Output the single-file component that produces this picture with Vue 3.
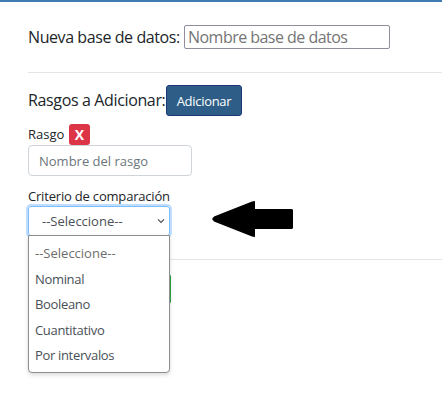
<script setup>
import { ref } from 'vue'

const database = ref('')
const feature = ref('')
const options = ['--Seleccione--', 'Nominal', 'Booleano', 'Cuantitativo', 'Por intervalos']
</script>

<template>
  <main class="page">
    <form class="form" @submit.prevent>
      <div class="database-row">
        <label class="heading" for="db">Nueva base de datos:</label>
        <input id="db" v-model="database" class="database" placeholder="Nombre base de datos" />
      </div>
      <hr class="rule" />
      <div class="add-row">
        <span class="heading traits">Rasgos a Adicionar:</span>
        <button type="button" class="add">Adicionar</button>
      </div>
      <div class="feature-row">
        <label class="small feature-label" for="feature">Rasgo</label>
        <button type="button" class="remove">X</button>
      </div>
      <input id="feature" v-model="feature" class="feature" placeholder="Nombre del rasgo" />
      <span class="small criterion">Criterio de comparación</span>
      <div class="select-row">
        <div class="select">
          <span class="value">--Seleccione--</span>
          <svg class="chevron" width="8" height="6" viewBox="0 0 8 6">
            <path d="M1 1.3 4 4.3 7 1.3" fill="none" stroke="#495057" stroke-width="1.2" />
          </svg>
          <ul class="menu">
            <li v-for="(option, i) in options" :key="option" :class="['option', 'o' + i]">
              <span>{{ option }}</span>
            </li>
          </ul>
        </div>
        <svg class="arrow" width="82" height="37" viewBox="0 0 82 37">
          <path d="M0 18 2 15.500 40 0.500 43 0V8H80L81 9V27L80 28H43V36L40 35.500 2 20.500Z" fill="#000" />
        </svg>
      </div>
      <hr class="rule bottom" />
      <button type="button" class="save" aria-label="Guardar"></button>
    </form>
  </main>
</template>

<style>
body {
  margin: 0;
  background: #fff;
}
</style>

<style scoped>
* {
  box-sizing: border-box;
}
.page {
  height: 400px;
  overflow: hidden;
  border-top: 2px solid #3f7ab3;
  font-family: "Open Sans", "Noto Sans", sans-serif;
  color: #212529;
}
.form {
  display: flex;
  flex-direction: column;
  align-items: flex-start;
  padding: 23px 0 0 28px;
}
.database-row {
  display: flex;
  align-items: center;
  height: 24px;
}
.heading {
  width: 156px;
  font-size: 16px;
  line-height: 24px;
  letter-spacing: -0.42px;
  white-space: nowrap;
}
.database {
  width: 206px;
  height: 24px;
  padding: 0 3px;
  border: 1px solid #8f8f9d;
  border-radius: 2px;
  font: 16px "Open Sans", sans-serif;
  letter-spacing: -0.53px;
}
input::placeholder {
  color: #757575;
  opacity: 1;
}
.rule {
  width: 100%;
  height: 1px;
  margin: 23px 0 12px;
  border: 0;
  background: #e5e5e5;
}
.add-row {
  display: flex;
  height: 31px;
}
.traits {
  width: 138px;
  padding-top: 3px;
  letter-spacing: -0.36px;
}
.add {
  width: 76px;
  height: 31px;
  padding: 1px 0 0;
  border: 1px solid #1c3678;
  border-radius: 3px;
  background: #2e5e87;
  color: #fff;
  font: 13px "Open Sans", sans-serif;
  letter-spacing: -0.3px;
}
.feature-row {
  display: flex;
  height: 21px;
  margin-top: 8px;
}
.small {
  font-size: 13px;
  line-height: 20px;
  letter-spacing: -0.19px;
  white-space: nowrap;
}
.feature-label {
  width: 41px;
  letter-spacing: 0;
}
.remove {
  width: 21px;
  height: 21px;
  padding: 0;
  border: 0;
  border-radius: 3px;
  background: #dc3545;
  color: #fff;
  font: bold 14px/22px "Open Sans", sans-serif;
}
.feature {
  width: 164px;
  height: 31px;
  padding: 1px 10px 0;
  border: 1px solid #ced4da;
  border-radius: 4px;
  font: 13px "Open Sans", sans-serif;
}
.feature::placeholder {
  color: #6c757d;
}
.criterion {
  margin-top: 10px;
}
.select-row {
  display: flex;
  height: 30px;
}
.select {
  position: relative;
  display: flex;
  align-items: center;
  justify-content: space-between;
  width: 142px;
  height: 30px;
  padding: 0 4px 0 13px;
  border: 1px solid #80bdff;
  border-radius: 3px;
  box-shadow: 0 0 0 2px #bfdeff;
  color: #495057;
  font-size: 13px;
}
.menu {
  position: absolute;
  top: 28px;
  left: -1px;
  width: 142px;
  height: 138px;
  margin: 0;
  padding: 5px 0 0;
  border: 1px solid #8f8f8f;
  border-radius: 0 0 4px 4px;
  background: #fff;
  box-shadow: 0 2px 4px #00000026;
  list-style: none;
  z-index: 1;
}
.option {
  height: 25.6px;
  padding-left: 6px;
  line-height: 25.6px;
  letter-spacing: -0.33px;
}
.o0 {
  color: #6d6d6d;
  letter-spacing: 0;
}
.arrow {
  margin: -5px 0 0 42px;
}
.bottom {
  margin: 23px 0 14px;
}
.save {
  width: 143px;
  height: 30px;
  padding: 0;
  border: 0;
  border-radius: 3px;
  background: #28a745;
}
</style>
